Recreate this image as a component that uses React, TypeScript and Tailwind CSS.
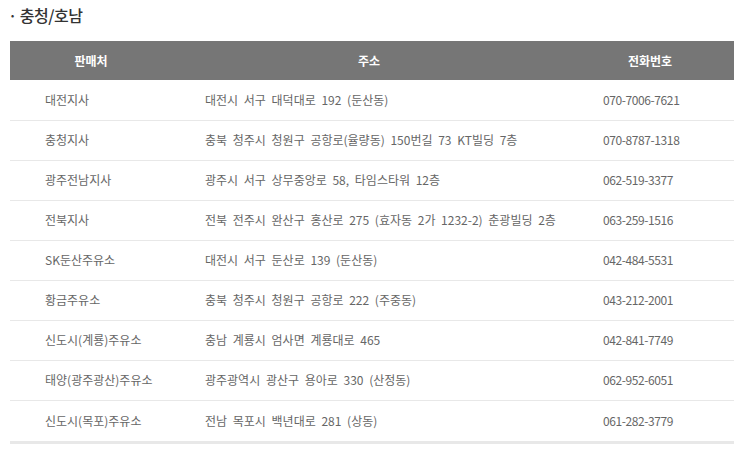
import React from "react";

const rows = [
  { name: "대전지사", addr: "대전시 서구 대덕대로 192 (둔산동)", tel: "070-7006-7621" },
  { name: "충청지사", addr: "충북 청주시 청원구 공항로(율량동) 150번길 73 KT빌딩 7층", tel: "070-8787-1318" },
  { name: "광주전남지사", addr: "광주시 서구 상무중앙로 58, 타임스타워 12층", tel: "062-519-3377" },
  { name: "전북지사", addr: "전북 전주시 완산구 홍산로 275 (효자동 2가 1232-2) 춘광빌딩 2층", tel: "063-259-1516" },
  { name: "SK둔산주유소", addr: "대전시 서구 둔산로 139 (둔산동)", tel: "042-484-5531" },
  { name: "황금주유소", addr: "충북 청주시 청원구 공항로 222 (주중동)", tel: "043-212-2001" },
  { name: "신도시(계룡)주유소", addr: "충남 계룡시 엄사면 계룡대로 465", tel: "042-841-7749" },
  { name: "태양(광주광산)주유소", addr: "광주광역시 광산구 용아로 330 (산정동)", tel: "062-952-6051" },
  { name: "신도시(목포)주유소", addr: "전남 목포시 백년대로 281 (상동)", tel: "061-282-3779" },
];

const App = () => {
  return (
    <div className="w-[751px] h-[460px] bg-white font-['Noto_Sans_CJK_KR',sans-serif]">
      <div className="h-[41px] pl-[8px] pt-[3px] text-[16px] font-medium text-[#333] tracking-[-0.5px]">
        · 충청/호남
      </div>
      <table className="ml-[10px] w-[724px] table-fixed border-collapse text-[12px] text-[#666]">
        <colgroup>
          <col className="w-[162px]" />
          <col className="w-[394px]" />
          <col className="w-[168px]" />
        </colgroup>
        <thead>
          <tr className="h-[39px] bg-[#767676] text-white">
            <th className="text-center font-bold">판매처</th>
            <th className="text-center font-bold">주소</th>
            <th className="text-center font-bold">전화번호</th>
          </tr>
        </thead>
        <tbody>
          {rows.map((r, i) => (
            <tr
              key={i}
              className={
                i === rows.length - 1
                  ? "h-[42px] border-b-[3px] border-[#e8e8e8]"
                  : "h-[40px] border-b border-[#e8e8e8]"
              }
            >
              <td className="pl-[35px] whitespace-nowrap">{r.name}</td>
              <td className="pl-[33px] whitespace-nowrap [word-spacing:3px]">{r.addr}</td>
              <td className="pl-[37px] whitespace-nowrap tracking-[-0.4px]">{r.tel}</td>
            </tr>
          ))}
        </tbody>
      </table>
    </div>
  );
};

export default App;
